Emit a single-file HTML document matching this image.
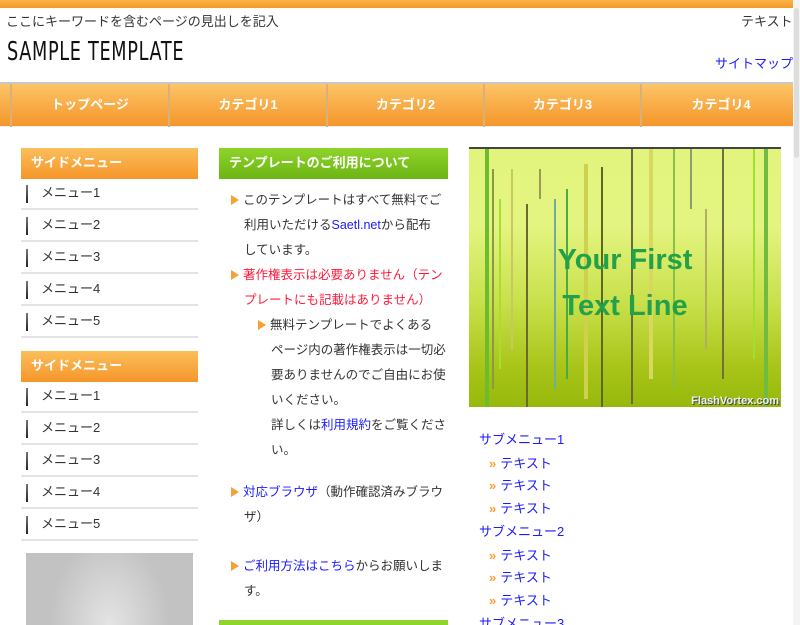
<!DOCTYPE html>
<html style="overflow:hidden;height:625px"><head><meta charset="utf-8"><style>
*{margin:0;padding:0;box-sizing:border-box}
body{width:800px;height:625px;overflow:hidden;background:#fff;font-family:"Liberation Sans","Noto Sans CJK JP",sans-serif;font-size:13px;color:#333;position:relative}
.a{position:absolute;white-space:nowrap}
.top{left:0;top:0;width:800px;height:8px;background:linear-gradient(#fbb44a,#f49a24)}
.nav{left:0;top:82px;width:800px;height:45px;border-top:2px solid #c8c8c8;background:linear-gradient(#fcc466,#f5962a);border-bottom:1px solid #eee}
.ni{position:absolute;top:0;height:43px;line-height:41px;text-align:center;color:#fff;font-weight:bold;font-size:13px;border-left:2px solid #d9b07a}
.sh{left:21px;width:177px;height:31px;background:linear-gradient(#fbbe5a,#f5962a);color:#fff;font-weight:bold;line-height:30px;padding-left:10px;font-size:13px}
.mi{left:21px;width:177px;height:32px;border-bottom:2px solid #e4e4e4;line-height:30px;padding-left:20px;font-size:13px}
.mi:before{content:"";position:absolute;left:5px;top:7px;width:2px;height:18px;background:linear-gradient(#777,#223)}
.gh{left:219px;top:148px;width:229px;height:31px;background:linear-gradient(#8fd42a,#6cb415);color:#fff;font-weight:bold;line-height:30px;padding-left:10px}
.t{font-size:12.5px;line-height:25px;white-space:nowrap}
.ar{display:inline-block;width:0;height:0;border-left:8px solid #f7a035;border-top:5px solid transparent;border-bottom:5px solid transparent;margin-right:4px;vertical-align:-1px}
.bl{color:#1a1aff}.rd{color:#ff1a3a}
.sub{color:#1a1aff;font-size:13px}
.dd{color:#f7a035;font-weight:bold;margin-right:4px}
</style></head><body>
<div class="a top"></div>
<div class="a" style="left:6px;top:11px;font-size:13px">ここにキーワードを含むページの見出しを記入</div>
<div class="a" style="left:741px;top:11px;font-size:13px">テキスト</div>
<div class="a" style="left:7px;top:37px;font-size:26px;color:#111;font-family:'DejaVu Sans','Liberation Sans',sans-serif;transform:scaleX(.68);transform-origin:left;letter-spacing:1px">SAMPLE TEMPLATE</div>
<div class="a bl" style="left:715px;top:53px;font-size:13px">サイトマップ</div>
<div class="a nav">
<div class="ni" style="left:10px;width:158px">トップページ</div>
<div class="ni" style="left:168px;width:158px">カテゴリ1</div>
<div class="ni" style="left:326px;width:157px">カテゴリ2</div>
<div class="ni" style="left:483px;width:157px">カテゴリ3</div>
<div class="ni" style="left:640px;width:160px">カテゴリ4</div>
</div>
<div class="a" style="left:793px;top:0;width:7px;height:625px;background:#f4f4f4"></div>
<div class="a" style="left:794px;top:8px;width:5px;height:150px;background:#ddd;border-radius:3px"></div>

<div class="a sh" style="top:148px">サイドメニュー</div>
<div class="a mi" style="top:178px">メニュー1</div>
<div class="a mi" style="top:210px">メニュー2</div>
<div class="a mi" style="top:242px">メニュー3</div>
<div class="a mi" style="top:274px">メニュー4</div>
<div class="a mi" style="top:306px">メニュー5</div>
<div class="a sh" style="top:351px">サイドメニュー</div>
<div class="a mi" style="top:381px">メニュー1</div>
<div class="a mi" style="top:413px">メニュー2</div>
<div class="a mi" style="top:445px">メニュー3</div>
<div class="a mi" style="top:477px">メニュー4</div>
<div class="a mi" style="top:509px">メニュー5</div>
<div class="a" style="left:26px;top:553px;width:167px;height:72px;background:radial-gradient(ellipse 60px 90px at 50% 100%,#e4e4e4,#c2c2c2)"></div>

<div class="a gh">テンプレートのご利用について</div>
<div class="a t" style="left:231px;top:188px">
<div><span class="ar"></span>このテンプレートはすべて無料でご</div>
<div style="padding-left:13px">利用いただける<span class="bl">Saetl.net</span>から配布<br>しています。</div>
<div class="rd"><span class="ar"></span>著作権表示は必要ありません（テン</div>
<div class="rd" style="padding-left:13px">プレートにも記載はありません）</div>
<div style="padding-left:27px"><span class="ar"></span>無料テンプレートでよくある</div>
<div style="padding-left:40px">ページ内の著作権表示は一切必<br>要ありませんのでご自由にお使<br>いください。<br>詳しくは<span class="bl">利用規約</span>をご覧くださ<br>い。</div>
<div style="height:17px"></div>
<div><span class="ar"></span><span class="bl">対応ブラウザ</span>（動作確認済みブラウ</div>
<div style="padding-left:13px">ザ）</div>
<div style="height:24px"></div>
<div><span class="ar"></span><span class="bl">ご利用方法はこちら</span>からお願いしま</div>
<div style="padding-left:13px">す。</div>
</div>
<div class="a" style="left:219px;top:620px;width:229px;height:5px;background:#8fd42a"></div>

<div class="a" style="left:469px;top:147px;width:312px;height:260px;border-top:2px solid #444;background:linear-gradient(#e2f47e 0%,#e4f480 30%,#c8e04a 60%,#a8c418 85%,#96b80c 100%);overflow:hidden">
<svg width="312" height="260" style="position:absolute;left:0;top:0">
<g stroke-width="2">
<line x1="18" y1="0" x2="18" y2="260" stroke="#6cbc2c" stroke-width="4"/>
<line x1="24" y1="20" x2="24" y2="240" stroke="#8a9a40"/>
<line x1="31" y1="50" x2="31" y2="220" stroke="#a6e02a"/>
<line x1="43" y1="20" x2="43" y2="200" stroke="#c8c860"/>
<line x1="58" y1="55" x2="58" y2="260" stroke="#6a6a30"/>
<line x1="71" y1="20" x2="71" y2="50" stroke="#9a9a60"/>
<line x1="86" y1="50" x2="86" y2="240" stroke="#6ab0a0"/>
<line x1="98" y1="40" x2="98" y2="230" stroke="#4caa40"/>
<line x1="117" y1="15" x2="117" y2="250" stroke="#d0d050" stroke-width="4"/>
<line x1="133" y1="18" x2="133" y2="260" stroke="#5a6a20"/>
<line x1="163" y1="0" x2="163" y2="255" stroke="#6a6a40"/>
<line x1="182" y1="0" x2="182" y2="230" stroke="#d8d860" stroke-width="4"/>
<line x1="205" y1="0" x2="205" y2="240" stroke="#88c048"/>
<line x1="222" y1="0" x2="222" y2="60" stroke="#88a070"/>
<line x1="237" y1="60" x2="237" y2="200" stroke="#b0b060"/>
<line x1="254" y1="0" x2="254" y2="230" stroke="#707040"/>
<line x1="285" y1="0" x2="285" y2="210" stroke="#a0e030"/>
<line x1="297" y1="0" x2="297" y2="260" stroke="#70bc40" stroke-width="4"/>
</g></svg>
<div class="a" style="left:0;width:312px;top:88px;text-align:center;font-size:29px;font-weight:bold;color:#22a04a;line-height:46px">Your First<br>Text Line</div>
<div class="a" style="right:2px;bottom:0;font-size:11px;font-weight:bold;color:#eee;text-shadow:1px 1px 0 #444">FlashVortex.com</div>
</div>

<div class="a sub" style="left:479px;top:429px">サブメニュー1</div>
<div class="a sub" style="left:489px;top:453px"><span class="dd">&raquo;</span>テキスト</div>
<div class="a sub" style="left:489px;top:475px"><span class="dd">&raquo;</span>テキスト</div>
<div class="a sub" style="left:489px;top:498px"><span class="dd">&raquo;</span>テキスト</div>
<div class="a sub" style="left:479px;top:521px">サブメニュー2</div>
<div class="a sub" style="left:489px;top:545px"><span class="dd">&raquo;</span>テキスト</div>
<div class="a sub" style="left:489px;top:567px"><span class="dd">&raquo;</span>テキスト</div>
<div class="a sub" style="left:489px;top:590px"><span class="dd">&raquo;</span>テキスト</div>
<div class="a sub" style="left:479px;top:613px">サブメニュー3</div>
</body></html>
